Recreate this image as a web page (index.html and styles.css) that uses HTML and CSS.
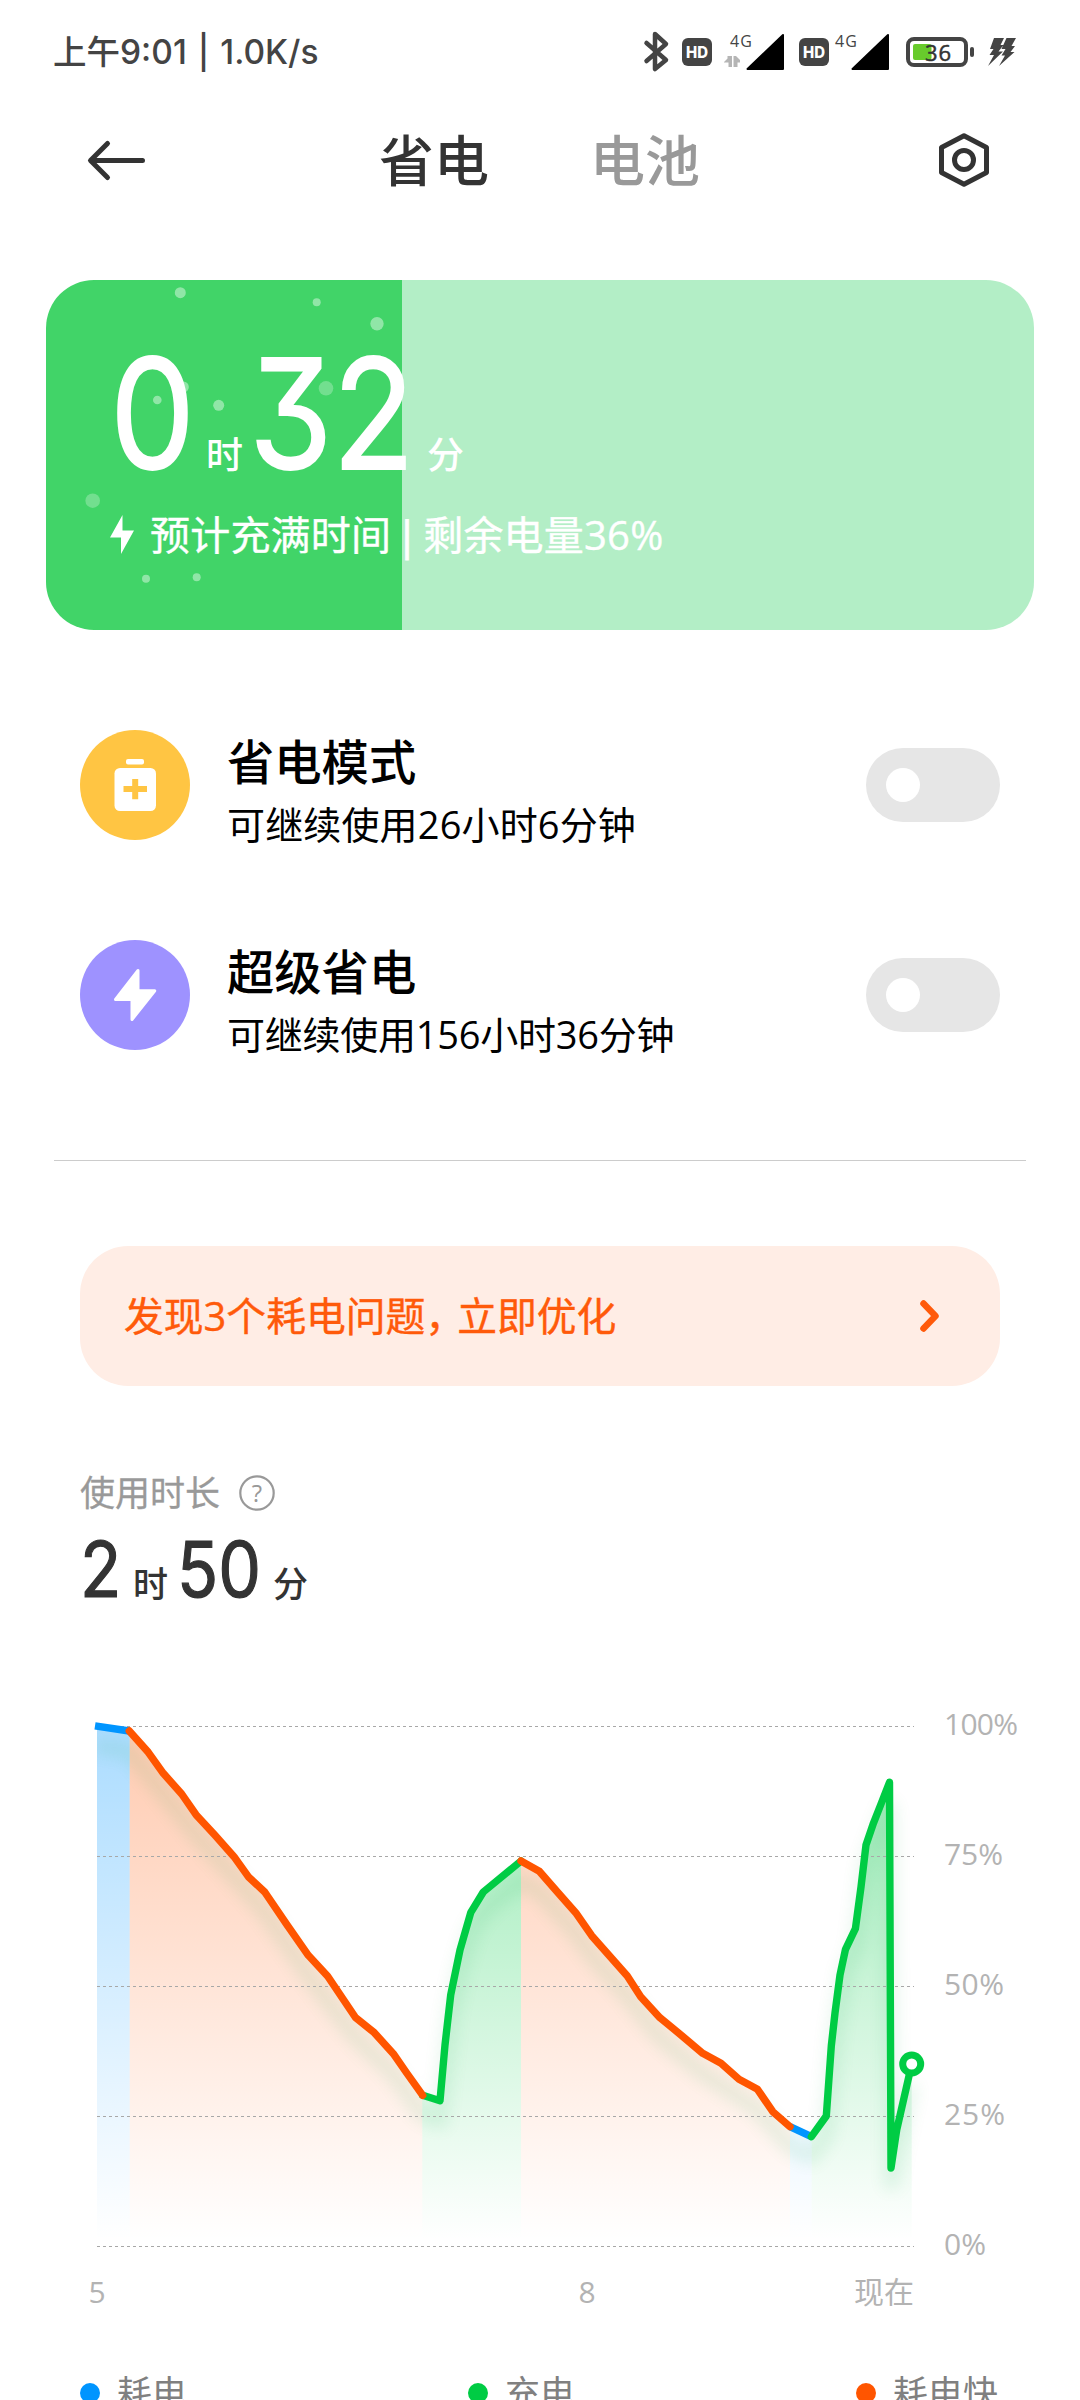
FILE: index.html
```html
<!DOCTYPE html>
<html lang="zh-CN">
<head>
<meta charset="utf-8">
<title>省电与电池</title>
<link rel="stylesheet" href="styles.css">
</head>
<body>
<main class="screen">
  <div class="status">
    <div class="status-text">上午9:01 | 1.0K/s</div>
    <svg class="status-icons" width="380" height="50" viewBox="640 27 380 50">
      <path class="bt" d="M646.500 43 666 60 655 69V34L666 44 646.500 61"/>
      <g class="hd">
        <rect x="682" y="38" width="30" height="28" rx="6"/>
        <text x="697" y="57.500" textLength="22" lengthAdjust="spacingAndGlyphs">HD</text>
        <rect x="799" y="38" width="30" height="28" rx="6"/>
        <text x="814" y="57.500" textLength="22" lengthAdjust="spacingAndGlyphs">HD</text>
      </g>
      <text class="net" x="730" y="47" textLength="22">4G</text>
      <path class="data" d="M724 62 727.500 58.500V56H732V67H728.500V62.500H724ZM733.500 56H736L740 60V62.500H737.500V67H733.500Z"/>
      <path class="signal" d="M783 35V69H747.500ZM888 35V69H852.500Z"/>
      <text class="net" x="835" y="47" textLength="22">4G</text>
      <rect class="batt" x="908" y="39" width="58" height="26" rx="6"/>
      <rect class="batt-fill" x="913" y="44" width="18.500" height="16" rx="2"/>
      <rect class="batt-nub" x="970" y="47" width="4" height="10" rx="2"/>
      <text class="batt-num" x="925" y="61" textLength="26">36</text>
      <path class="charge" d="M994 38H1004L1000.500 45H1003.500L998.500 51.500H1003L988 66 994 55H989.500L993.500 49H990ZM1006.500 38H1016L1011.500 46H1015L1010.500 52H1014.500L999 66 1005 55.500H1001.500L1005.500 49H1001.500Z"/>
    </svg>
  </div>

  <header class="bar">
    <svg width="60" height="56" viewBox="86 132 60 56"><path class="line" d="M142.500 160.500H91M107.500 143.500 90.500 160.500 107.500 177.500"/></svg>
    <nav class="tabs"><span class="tab active">省电</span><span class="tab">电池</span></nav>
    <svg width="56" height="56" viewBox="936 132 56 56"><path class="line" d="M964 135.700 986.500 147.500V172.500L964 184.300 941.500 172.500V147.500Z"/><circle class="line" cx="964" cy="160" r="9.500"/></svg>
  </header>

  <section class="card">
    <svg class="bubbles" width="356" height="350" viewBox="46 280 356 350">
      <g class="b1"><circle cx="180.300" cy="292.700" r="5.500"/><circle cx="316.700" cy="302.300" r="4"/><circle cx="377" cy="323.700" r="6.700"/><circle cx="157.300" cy="400" r="4.300"/><circle cx="218.700" cy="405.300" r="5.500"/><circle cx="183.300" cy="387" r="5.500"/><circle cx="146" cy="578.700" r="4"/><circle cx="196.700" cy="577.300" r="4"/></g>
      <g class="b2"><circle cx="326" cy="388.300" r="7.300"/><circle cx="92.700" cy="500.700" r="7.300"/></g>
    </svg>
    <div class="eta"><span class="big h">0</span><span class="unit u1">时</span><span class="big m">32</span><span class="unit u2">分</span></div>
    <div class="info">
      <svg width="24" height="40" viewBox="0 0 24 40"><path d="M12.500 0V15.500H24L11 39V22.500H0Z"/></svg>
      <span>预计充满时间<i class="sep">|</i>剩余电量36%</span>
    </div>
  </section>

  <section class="modes">
    <div class="mode">
      <svg class="icon" width="110" height="110" viewBox="80 730 110 110"><circle class="amber" cx="135" cy="785" r="55"/><rect class="w" x="126" y="759" width="18" height="5.500" rx="2"/><rect class="w" x="114.500" y="768" width="41.500" height="43" rx="5.500"/><path class="plus" d="M123.500 789H147M135.200 779V799.300"/></svg>
      <div class="label"><div class="name">省电模式</div><div class="desc">可继续使用26小时6分钟</div></div>
      <div class="toggle"><span></span></div>
    </div>
    <div class="mode">
      <svg class="icon" width="110" height="110" viewBox="80 940 110 110"><circle class="violet" cx="135" cy="995" r="55"/><path class="w bolt" d="M138 970.500V990.700H154.800L132 1019.500V999.500H115.500Z"/></svg>
      <div class="label"><div class="name">超级省电</div><div class="desc tight">可继续使用156小时36分钟</div></div>
      <div class="toggle"><span></span></div>
    </div>
  </section>

  <div class="rule"></div>

  <section class="alert">
    <span>发现3个耗电问题<i class="comma">，</i>立即优化</span>
    <svg width="24" height="36" viewBox="0 0 24 36"><path d="M5.500 5.500 17.500 18 5.500 30.500"/></svg>
  </section>

  <section class="usage">
    <div class="caption"><span>使用时长</span>
      <svg width="36" height="36" viewBox="0 0 36 36"><circle cx="18" cy="18" r="16.700"/><text x="18" y="26.500">?</text></svg>
    </div>
    <div class="total"><span class="num n1">2</span><span class="tunit t1">时</span><span class="num n2">50</span><span class="tunit t2">分</span></div>
  </section>

  <svg class="chart" width="1080" height="640" viewBox="0 1680 1080 640">
    <defs>
      <linearGradient id="gb" gradientUnits="userSpaceOnUse" x1="0" y1="1726" x2="0" y2="2240"><stop offset="0" stop-color="#0095ff" stop-opacity=".33"/><stop offset="1" stop-color="#0095ff" stop-opacity="0"/></linearGradient>
      <linearGradient id="go" gradientUnits="userSpaceOnUse" x1="0" y1="1726" x2="0" y2="2240"><stop offset="0" stop-color="#ff5500" stop-opacity=".31"/><stop offset="1" stop-color="#ff5500" stop-opacity="0"/></linearGradient>
      <linearGradient id="gg" gradientUnits="userSpaceOnUse" x1="0" y1="1726" x2="0" y2="2240"><stop offset="0" stop-color="#00cc44" stop-opacity=".42"/><stop offset="1" stop-color="#00cc44" stop-opacity="0"/></linearGradient>
      <filter id="soft" filterUnits="userSpaceOnUse" x="60" y="1700" width="900" height="560"><feGaussianBlur stdDeviation="8"/></filter>
      <clipPath id="area"><rect x="97" y="1690" width="860" height="600"/></clipPath>
    </defs>
    <path fill="url(#gb)" d="M97 1726 129.700 1731V2240H97ZM790 2126.700 811.700 2136.700V2240H790Z"/>
    <path fill="url(#go)" d="M129.700 1731 148.300 1752.300 163.300 1773.300 181.700 1794 196 1814.700 215 1835.300 234 1856.700 248.300 1876.700 264.700 1892 286.700 1924.300 308.300 1955.300 327.700 1976.300 355.300 2017.300 374.300 2032.700 393.300 2053.700 406.700 2073 422.300 2095.300V2240H129.700ZM521 1861 539.300 1871.300 558.500 1893.300 575.700 1912.700 591.700 1935.700 627.300 1976 640.700 1996.700 659.900 2017.700 679 2033.300 702.700 2053.300 721 2063.300 739 2079.300 757.500 2089.300 772.800 2111.700 790 2126.700V2240H521Z"/>
    <path fill="url(#gg)" d="M422.300 2095.300 440 2100.700 450.700 1995 460 1950 470.700 1912.700 483.300 1892 521 1861V2240H422.300ZM811.700 2136.700 826.300 2116 831.300 2046 835 2013 845.500 1949.300 855.400 1928.700 861 1887 866 1845 873.400 1823.300 881 1804 889.500 1782.300 891 2169 896.700 2130 911.700 2064V2240H811.700Z"/>
    <g clip-path="url(#area)"><path class="shadow" filter="url(#soft)" d="M95 1746 129 1751 163.300 1793.300 196 1834.700 234 1876.700 264.700 1912 308.300 1975.300 355.300 2037.300 393.300 2073.700 422.700 2115.300 440 2120.700 450.700 2015 460 1970 470.700 1932.700 483.300 1912 520.700 1881 539.300 1891.300 575.700 1932.700 591.700 1955.700 627.300 1996 659.900 2037.700 702.700 2073.300 757.500 2109.300 790 2146.700 811.400 2156.700 826.300 2136 835 2033 845.500 1969.300 855.400 1948.700 866 1865 873.400 1843.300 889.500 1802.300 891 2189 896.700 2150 911.700 2084"/></g>
    <path class="grid" d="M97 1726.500H914M97 1856.500H914M97 1986.500H914M97 2116.500H914M97 2246.500H914"/>
    <path class="s blue" d="M95 1725.800 129.300 1731M790 2126.700 811.400 2136.700"/>
    <path class="s green" d="M422.700 2095.300 440 2100.700 445 2045 450.700 1995 460 1950 470.700 1912.700 483.300 1892 521 1861M811.400 2136.700 826.300 2116 831.300 2046 835 2013 840 1975 845.500 1949.300 855.400 1928.700 861 1887 866 1845 873.400 1823.300 881 1804 889.500 1782.300 891 2168 896.700 2130 911.700 2064"/>
    <path class="s orange" d="M129.300 1731 148.300 1752.300 163.300 1773.300 181.700 1794 196 1814.700 215 1835.300 234 1856.700 248.300 1876.700 264.700 1892 286.700 1924.300 308.300 1955.300 327.700 1976.300 355.300 2017.300 374.300 2032.700 393.300 2053.700 406.700 2073 422.700 2095.300M521 1861 539.300 1871.300 558.500 1893.300 575.700 1912.700 591.700 1935.700 627.300 1976 640.700 1996.700 659.900 2017.700 679 2033.300 702.700 2053.300 721 2063.300 739 2079.300 757.500 2089.300 772.800 2111.700 790 2126.700"/>
    <circle class="now" cx="911.700" cy="2064" r="9"/>
    <g class="axis">
      <text x="944" y="1735" textLength="74">100%</text><text x="944" y="1865" textLength="59">75%</text><text x="944" y="1995" textLength="60">50%</text><text x="944" y="2125" textLength="61">25%</text><text x="944" y="2255" textLength="42">0%</text>
      <text x="97" y="2303" text-anchor="middle">5</text><text x="587" y="2303" text-anchor="middle">8</text><text x="914" y="2303" text-anchor="end">现在</text>
    </g>
  </svg>

  <div class="legend">
    <div class="key"><span class="dot kb"></span>耗电</div>
    <div class="key"><span class="dot kg"></span>充电</div>
    <div class="key"><span class="dot ko"></span>耗电快</div>
  </div>
</main>
</body>
</html>
```
FILE: styles.css
```css
* { box-sizing: border-box; }
body { margin: 0; background: #fff; font-family: "Open Sans", "Noto Sans CJK SC", sans-serif; }
svg { display: block; flex: none; }
i { font-style: normal; }
.screen { width: 1080px; height: 2400px; overflow: hidden; display: flex; flex-direction: column; background: #fff; white-space: nowrap; }
.screen > * { flex: none; }

.status { height: 104px; display: flex; justify-content: space-between; padding: 27px 60px 0 53px; color: #444; }
.status-text { font-family: Inter, "Noto Sans CJK SC", sans-serif; font-size: 33.500px; font-weight: 500; line-height: 50px; letter-spacing: 0; word-spacing: 2px; }
.bt { fill: none; stroke: #444; stroke-width: 4.500; stroke-linejoin: round; stroke-linecap: round; }
.hd rect, .batt-nub, .charge { fill: #444; }
.hd text { fill: #fff; font: 800 16px Inter, sans-serif; text-anchor: middle; }
.net { fill: #444; font-size: 16px; font-weight: 500; }
.data { fill: #b5b5b5; }
.signal { fill: #000; stroke: #000; stroke-width: 2; stroke-linejoin: round; }
.batt { fill: none; stroke: #444; stroke-width: 4; }
.batt-fill { fill: #68cb2c; }
.batt-num { fill: #333; font-size: 22px; font-weight: 500; stroke: #333; stroke-width: .5; }

.bar { height: 112px; display: flex; align-items: center; justify-content: space-between; padding: 0 88px 0 86px; }
.tabs { display: flex; gap: 101px; margin-left: -3px; font-size: 55px; font-weight: 500; line-height: 80px; }
.tab { color: #999; }
.active { color: #333; }
.line { fill: none; stroke: #333; stroke-width: 5; stroke-linecap: round; stroke-linejoin: round; }

.card { position: relative; margin: 64px 46px 0; height: 350px; border-radius: 48px; overflow: hidden; background: linear-gradient(90deg, #41d468 356px, #b3eec6 356px); color: #fff; padding: 75px 64px 0; }
.bubbles { position: absolute; left: 0; top: 0; }
.b1 { fill: #fff; opacity: .42; }
.b2 { fill: #fff; opacity: .26; }
.eta { position: relative; display: flex; height: 118px; align-items: baseline; line-height: 118px; }
.big, .num { font-family: Inter, sans-serif; font-feature-settings: "cv09"; transform-origin: left; transform: scaleX(.88); }
.big { font-size: 153px; font-weight: 400; -webkit-text-stroke: 1.8px #fff; }
.h { width: 96px; }
.m { width: 178px; }
.unit { font-size: 37px; font-weight: 500; }
.u1 { width: 43px; }
.info { position: relative; display: flex; align-items: center; gap: 16px; height: 56px; margin-top: 34px; font-size: 40px; letter-spacing: .2px; line-height: 56px; -webkit-text-stroke: .4px #fff; }
.info svg { fill: #fff; }
.sep { display: inline-block; width: 32px; text-align: center; -webkit-text-stroke: 1px #fff; }

.modes { padding-top: 50px; }
.mode { height: 210px; display: flex; align-items: center; padding: 0 80px; }
.amber { fill: #ffc543; }
.violet { fill: #9e92ff; }
.w { fill: #fff; }
.plus { stroke: #ffc543; stroke-width: 6; }
.bolt { stroke: #fff; stroke-width: 3; stroke-linejoin: round; }
.label { flex: 1; margin: 9px 0 0 37px; color: #000; }
.name { font-size: 47.300px; font-weight: 500; line-height: 68px; }
.desc { font-size: 38px; line-height: 56px; letter-spacing: .15px; }
.tight { letter-spacing: -.25px; }
.toggle { width: 134px; height: 74px; border-radius: 37px; background: #e6e6e6; padding: 20px; }
.toggle span { display: block; width: 34px; height: 34px; border-radius: 50%; background: #fff; }

.rule { height: 1px; background: #ccc; margin: 60px 54px 0; }
.alert { margin: 85px 80px 0; height: 140px; border-radius: 48px; background: #ffede5; color: #ff5a0a; padding: 0 58px 0 44px; display: flex; align-items: center; justify-content: space-between; font-size: 39.800px; line-height: 60px; -webkit-text-stroke: .4px #ff5a0a; }
.alert svg { fill: none; stroke: #ff5a0a; stroke-width: 6.500; stroke-linecap: round; stroke-linejoin: round; }
.comma { letter-spacing: -8px; }

.usage { padding: 82px 80px 0; height: 294px; color: #333; }
.caption { display: flex; align-items: center; height: 50px; color: #999; font-size: 35px; line-height: 50px; gap: 19px; -webkit-text-stroke: .3px #999; }
.caption circle { fill: none; stroke: #999; stroke-width: 2.200; }
.caption text { fill: #999; font-size: 24px; text-anchor: middle; }
.total { display: flex; align-items: baseline; line-height: 60px; height: 60px; margin-top: 21px; }
.num { font-size: 77px; font-weight: 400; -webkit-text-stroke: 1.2px #333; }
.n1 { width: 53px; }
.tunit { font-size: 35px; font-weight: 500; }
.t1 { width: 44px; }
.n2 { width: 96px; }

.chart text { font-size: 30px; fill: #b3b3b3; }
.s { fill: none; stroke-width: 7.400; stroke-linejoin: round; }
.blue { stroke: #0095ff; }
.green { stroke: #00cc44; stroke-linecap: round; }
.orange { stroke: #ff5500; stroke-linecap: round; }
.shadow { fill: none; stroke: #00a040; stroke-width: 14; opacity: .1; }
.grid { stroke: #a8a8a8; stroke-width: 1; stroke-dasharray: 3 3; }
.now { fill: #fff; stroke: #00cc44; stroke-width: 7; }

.legend { display: grid; grid-template-columns: 388px 388px 1fr; padding: 47px 0 0 80px; }
.key { display: flex; align-items: center; gap: 17px; font-size: 35px; line-height: 52px; color: #808080; }
.dot { width: 20px; height: 20px; border-radius: 50%; }
.kb { background: #0095ff; }
.kg { background: #00cc44; }
.ko { background: #ff5500; }
```
